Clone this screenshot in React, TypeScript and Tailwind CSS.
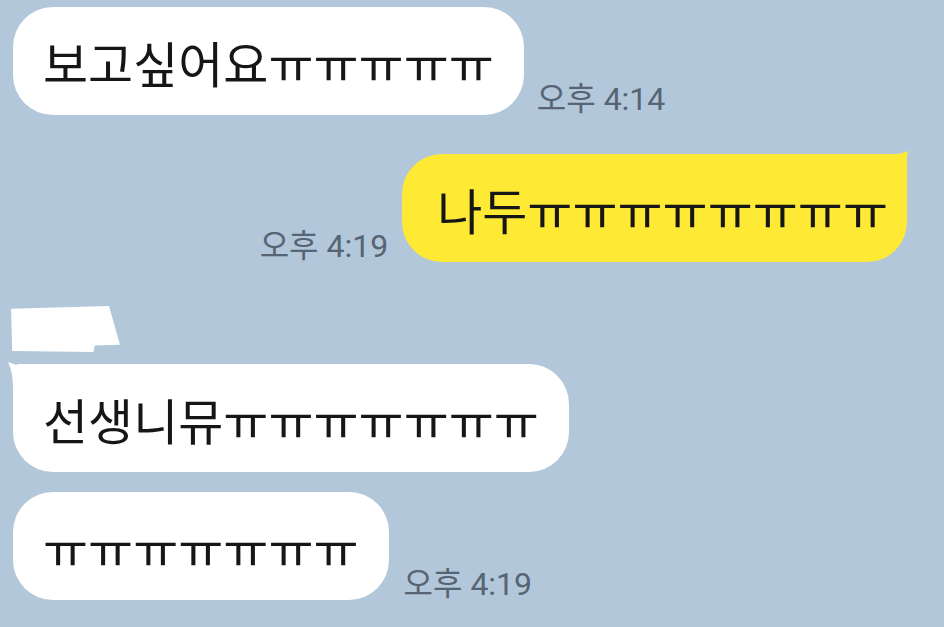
const font = { fontFamily: '"Noto Sans CJK KR", "Noto Sans", sans-serif' };

function Time({ children }: { children: string }) {
  return (
    <span
      className="text-[32px] leading-none text-[#566473] whitespace-nowrap"
      style={{ fontFamily: 'Roboto, "Noto Sans CJK KR", sans-serif' }}
    >
      {children}
    </span>
  );
}

function Bubble({
  text,
  yellow,
  tail,
}: {
  text: string;
  yellow?: boolean;
  tail?: "left" | "right";
}) {
  const bg = yellow ? "bg-[#fee935] pl-[35px] pr-[19px]" : "bg-white px-[30px]";
  const corner =
    tail === "left" ? "rounded-tl-[6px]" : tail === "right" ? "rounded-tr-[6px]" : "";
  return (
    <div
      className={`relative h-[108px] flex items-center rounded-[40px] ${corner} ${bg} text-[49px] leading-none text-[#161616] whitespace-nowrap`}
      style={font}
    >
      {tail === "right" && (
        <svg className="absolute -top-[3px] -right-[2px] w-[32px] h-[26px]" viewBox="0 0 32 26">
          <path d="M0 3 Q20 5 31 0 Q29 10 29 26 L0 26 Z" fill="#fee935" />
        </svg>
      )}
      {tail === "left" && (
        <svg className="absolute -top-[2px] -left-[5px] w-[32px] h-[26px]" viewBox="0 0 32 26">
          <path d="M32 6 Q14 6 0 0 Q5 10 5 26 L32 26 Z" fill="#ffffff" />
        </svg>
      )}
      <span className="relative">{text}</span>
    </div>
  );
}

export default function App() {
  return (
    <div className="w-[944px] h-[627px] bg-[#b2c7da] overflow-hidden flex flex-col pt-[7px]">
      <div className="flex items-end gap-[13px] pl-[13px]">
        <Bubble text="보고싶어요ㅠㅠㅠㅠㅠ" />
        <Time>오후 4:14</Time>
      </div>

      <div className="flex items-end justify-end gap-[14px] pr-[37px] mt-[39px]">
        <Time>오후 4:19</Time>
        <Bubble text="나두ㅠㅠㅠㅠㅠㅠㅠㅠ" yellow tail="right" />
      </div>

      {/* name hidden */}
      <div className="ml-[10px] mt-[44px] w-[110px] h-[46px] bg-white [clip-path:polygon(1%_6%,90%_0,100%_84%,77%_86%,76%_100%,2%_98%)]" />

      <div className="flex items-end pl-[13px] mt-[12px]">
        <Bubble text="선생니뮤ㅠㅠㅠㅠㅠㅠㅠ" tail="left" />
      </div>

      <div className="flex items-end gap-[15px] pl-[13px] mt-[20px]">
        <Bubble text="ㅠㅠㅠㅠㅠㅠㅠ" />
        <Time>오후 4:19</Time>
      </div>
    </div>
  );
}
